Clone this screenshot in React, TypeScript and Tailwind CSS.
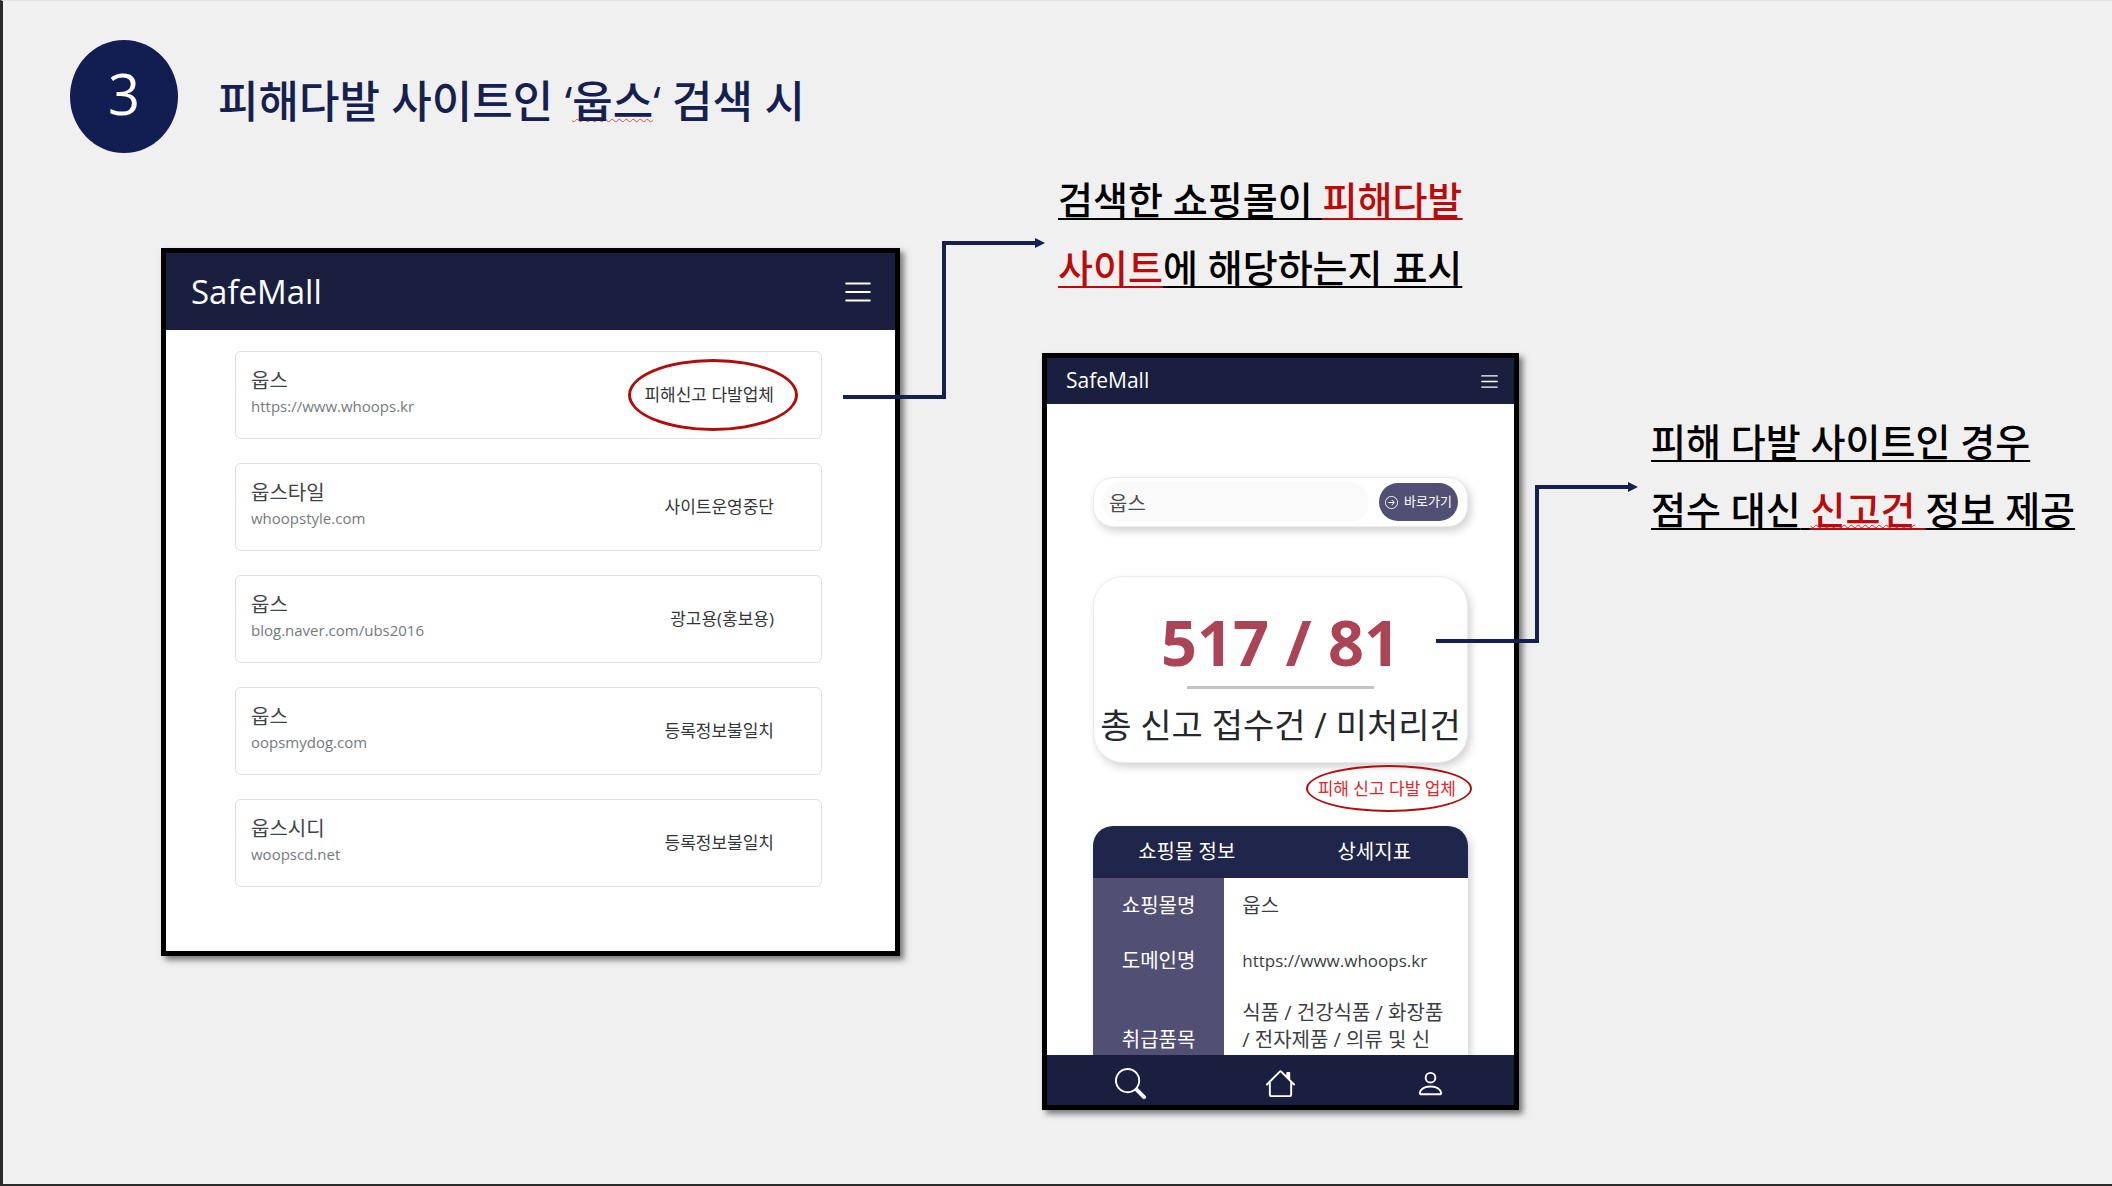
import type { ReactNode } from "react";
import { BsArrowRightCircle, BsHouse, BsPerson, BsSearch } from "react-icons/bs";

type Mall = { name: string; url: string; status: string; flagged?: boolean };

const malls: Mall[] = [
  { name: "웁스", url: "https://www.whoops.kr", status: "피해신고 다발업체", flagged: true },
  { name: "웁스타일", url: "whoopstyle.com", status: "사이트운영중단" },
  { name: "웁스", url: "blog.naver.com/ubs2016", status: "광고용(홍보용)" },
  { name: "웁스", url: "oopsmydog.com", status: "등록정보불일치" },
  { name: "웁스시디", url: "woopscd.net", status: "등록정보불일치" },
];

function MenuIcon({ className }: { className: string }) {
  return (
    <svg viewBox="0 0 30 30" className={className} fill="none" stroke="currentColor" strokeWidth="2" strokeLinecap="round" aria-hidden="true">
      <path d="M4 7h22M4 15h22M4 23h22" />
    </svg>
  );
}

/* Elbow arrow that links a highlighted spot to its caption */
function Connector({ className }: { className: string }) {
  return (
    <svg viewBox="0 0 202 164" className={className} fill="none" aria-hidden="true">
      <path d="M0 159H101V5H194" stroke="#14204f" strokeWidth="4" />
      <path d="M192 0L202 5L192 10Z" fill="#14204f" />
    </svg>
  );
}

function Callout({ className, children }: { className: string; children: ReactNode }) {
  return (
    <p className={`whitespace-nowrap text-[38px] leading-[68px] font-medium text-black underline decoration-2 underline-offset-[4px] [text-decoration-skip-ink:none] ${className}`}>
      {children}
    </p>
  );
}

function Red({ children }: { children: ReactNode }) {
  return (
    <span className="text-[#b90b0b] underline decoration-2 underline-offset-[4px] [text-decoration-skip-ink:none]">
      {children}
    </span>
  );
}

function ResultsWindow() {
  return (
    <section className="relative border-[5px] border-black bg-white shadow-[4px_4px_6px_rgba(0,0,0,0.5)]">
      <header className="flex h-[77px] items-center justify-between bg-[#1a1f40] pr-[10px] pl-[25px] text-white">
        <span className="text-[33px]">SafeMall</span>
        <button type="button" aria-label="메뉴" className="flex h-[40px] w-[54px] items-center justify-center rounded-md border border-[#1c2040]">
          <MenuIcon className="size-8" />
        </button>
      </header>
      <ul className="flex flex-col gap-6 pt-[21px] pr-[73px] pb-[64px] pl-[69px]">
        {malls.map((mall, i) => (
          <li key={i} className="flex h-[88px] items-center justify-between rounded-md border border-[#dfdfdf] pr-[47px] pl-[15px]">
            <div className="flex flex-col pb-1">
              <span className="text-[20px] leading-[26px] text-[#3f4347]">{mall.name}</span>
              <a href="#" className="text-[15px] leading-6 text-[#75797d]">{mall.url}</a>
            </div>
            <span className="relative text-[17px] leading-6 text-[#32363a]">
              {mall.status}
              {mall.flagged && (
                <span className="absolute -inset-y-6 -right-6 -left-4 rounded-[50%] border-[3px] border-[#b00d0d]" />
              )}
            </span>
          </li>
        ))}
      </ul>
      <Connector className="absolute top-[-15px] left-[calc(100%-52px)] h-[164px] w-[202px]" />
    </section>
  );
}

function PhoneWindow() {
  return (
    <section className="relative mt-[52px] border-[5px] border-black bg-white shadow-[4px_4px_6px_rgba(0,0,0,0.5)]">
      <header className="flex h-[46px] items-center justify-between bg-[#1a1f40] pr-[7px] pl-[19px] text-white">
        <span className="text-[21px]">SafeMall</span>
        <button type="button" aria-label="메뉴" className="flex h-[26px] w-[35px] items-center justify-center rounded border border-[#1c2040]">
          <MenuIcon className="size-[21px]" />
        </button>
      </header>

      <div className="px-[46px] pt-[73px]">
        <form className="flex h-[50px] items-center justify-between rounded-[20px] border border-[#ebebeb] bg-white pr-[9px] pl-2 shadow-[3px_4px_8px_rgba(0,0,0,0.18)]">
          <input aria-label="쇼핑몰 검색" defaultValue="웁스" className="h-[40px] w-[267px] min-w-0 rounded-[20px] bg-[#fafafa] px-[7px] text-[20px] text-[#4a4d50] outline-none" />
          <button type="button" className="flex h-[38px] w-[79px] shrink-0 items-center justify-center gap-[6px] rounded-[19px] bg-[#524f75] text-[13px] whitespace-nowrap text-white">
            <BsArrowRightCircle className="size-[13px]" />
            바로가기
          </button>
        </form>

        <div className="mt-[49px] flex h-[187px] flex-col items-center rounded-[30px] border border-[#ebebeb] bg-white pt-[31px] shadow-[3px_4px_8px_rgba(0,0,0,0.18)]">
          <strong className="text-[63px] leading-[68px] font-bold text-[#ab4556]">517 / 81</strong>
          <hr className="mt-[10px] h-[3px] w-1/2 border-0 bg-[#c4c4c4]" />
          <span className="mt-3 text-[34px] leading-[48px] whitespace-nowrap text-[#24282c]">총 신고 접수건 / 미처리건</span>
        </div>

        <p className="mt-[14px] pr-3 text-right text-[17px] leading-6 text-[#e0282b]">
          <span className="relative">
            피해 신고 다발 업체
            <span className="absolute -inset-y-3 -right-4 -left-3 rounded-[50%] border-2 border-[#b00d0d]" />
          </span>
        </p>

        <div className="mt-[25px] h-[229px] overflow-hidden rounded-t-[20px] shadow-[3px_4px_8px_rgba(0,0,0,0.18)]">
          <div className="flex h-[52px] bg-[#1f254b] text-[20px] text-white">
            <button type="button" className="flex-1">쇼핑몰 정보</button>
            <button type="button" className="flex-1">상세지표</button>
          </div>
          <table className="w-full table-fixed text-left text-[20px] leading-[27px] text-[#3b3f43]">
            <tbody>
              <tr className="h-[55px]">
                <th className="w-[35%] bg-[#524f75] text-center font-normal text-white">쇼핑몰명</th>
                <td className="pl-[18px]">웁스</td>
              </tr>
              <tr className="h-[54px]">
                <th className="bg-[#524f75] text-center font-normal text-white">도메인명</th>
                <td className="pl-[18px] text-[17px]">https://www.whoops.kr</td>
              </tr>
              <tr className="h-[104px]">
                <th className="bg-[#524f75] text-center font-normal text-white">취급품목</th>
                <td className="pt-3 pl-[18px] align-top whitespace-nowrap">
                  식품 / 건강식품 / 화장품
                  <br />/ 전자제품 / 의류 및 신
                </td>
              </tr>
            </tbody>
          </table>
        </div>
      </div>

      <nav className="relative flex h-[50px] items-center bg-[#1a1f40] px-2 pt-[6px] text-white">
        <button type="button" aria-label="검색" className="flex flex-1 justify-center"><BsSearch className="size-[31px]" /></button>
        <button type="button" aria-label="홈" className="flex flex-1 justify-center"><BsHouse className="size-[31px]" /></button>
        <button type="button" aria-label="내 정보" className="flex flex-1 justify-center"><BsPerson className="size-[31px]" /></button>
      </nav>
      <Connector className="absolute top-[124px] left-[calc(100%-78px)] h-[164px] w-[202px]" />
    </section>
  );
}

export default function App() {
  return (
    <main className="min-h-screen border-t border-b-2 border-l-[3px] border-t-[#e4e4e4] border-b-[#2b2b2b] border-l-[#2b2b2b] bg-[#f0f0f0] font-['Open_Sans','Noto_Sans_CJK_KR',sans-serif]">
      <header className="flex items-center gap-10 pt-[39px] pl-[67px]">
        <span className="flex h-[113px] w-[108px] items-center justify-center rounded-[50%] bg-[#121d52] pb-2 text-[56px] leading-none font-medium text-white">3</span>
        <h1 className="pt-2 text-[44px] leading-[60px] font-medium text-[#14204f]">
          피해다발 사이트인 ‘
          <span className="underline decoration-[#e8474d] decoration-wavy decoration-1 underline-offset-0 [text-decoration-skip-ink:none]">웁스</span>
          ‘ 검색 시
        </h1>
      </header>
      <div className="flex pl-[158px]">
        <div className="min-w-0 flex-[739] pt-[95px]">
          <ResultsWindow />
        </div>
        <div className="ml-[142px] min-w-0 flex-[477] pt-3">
          <Callout className="pl-4">
            검색한 쇼핑몰이 <Red>피해다발</Red>
            <br />
            <Red>사이트</Red>에 해당하는지 표시
          </Callout>
          <PhoneWindow />
        </div>
        <div className="ml-[132px] min-w-0 flex-[461] pt-[254px]">
          <Callout className="">
            피해 다발 사이트인 경우
            <br />
            점수 대신{" "}
            <Red>
              <span className="underline decoration-[#e02020] decoration-wavy decoration-1 underline-offset-0 [text-decoration-skip-ink:none]">신고건</span>{" "}
            </Red>
            정보 제공
          </Callout>
        </div>
      </div>
    </main>
  );
}
